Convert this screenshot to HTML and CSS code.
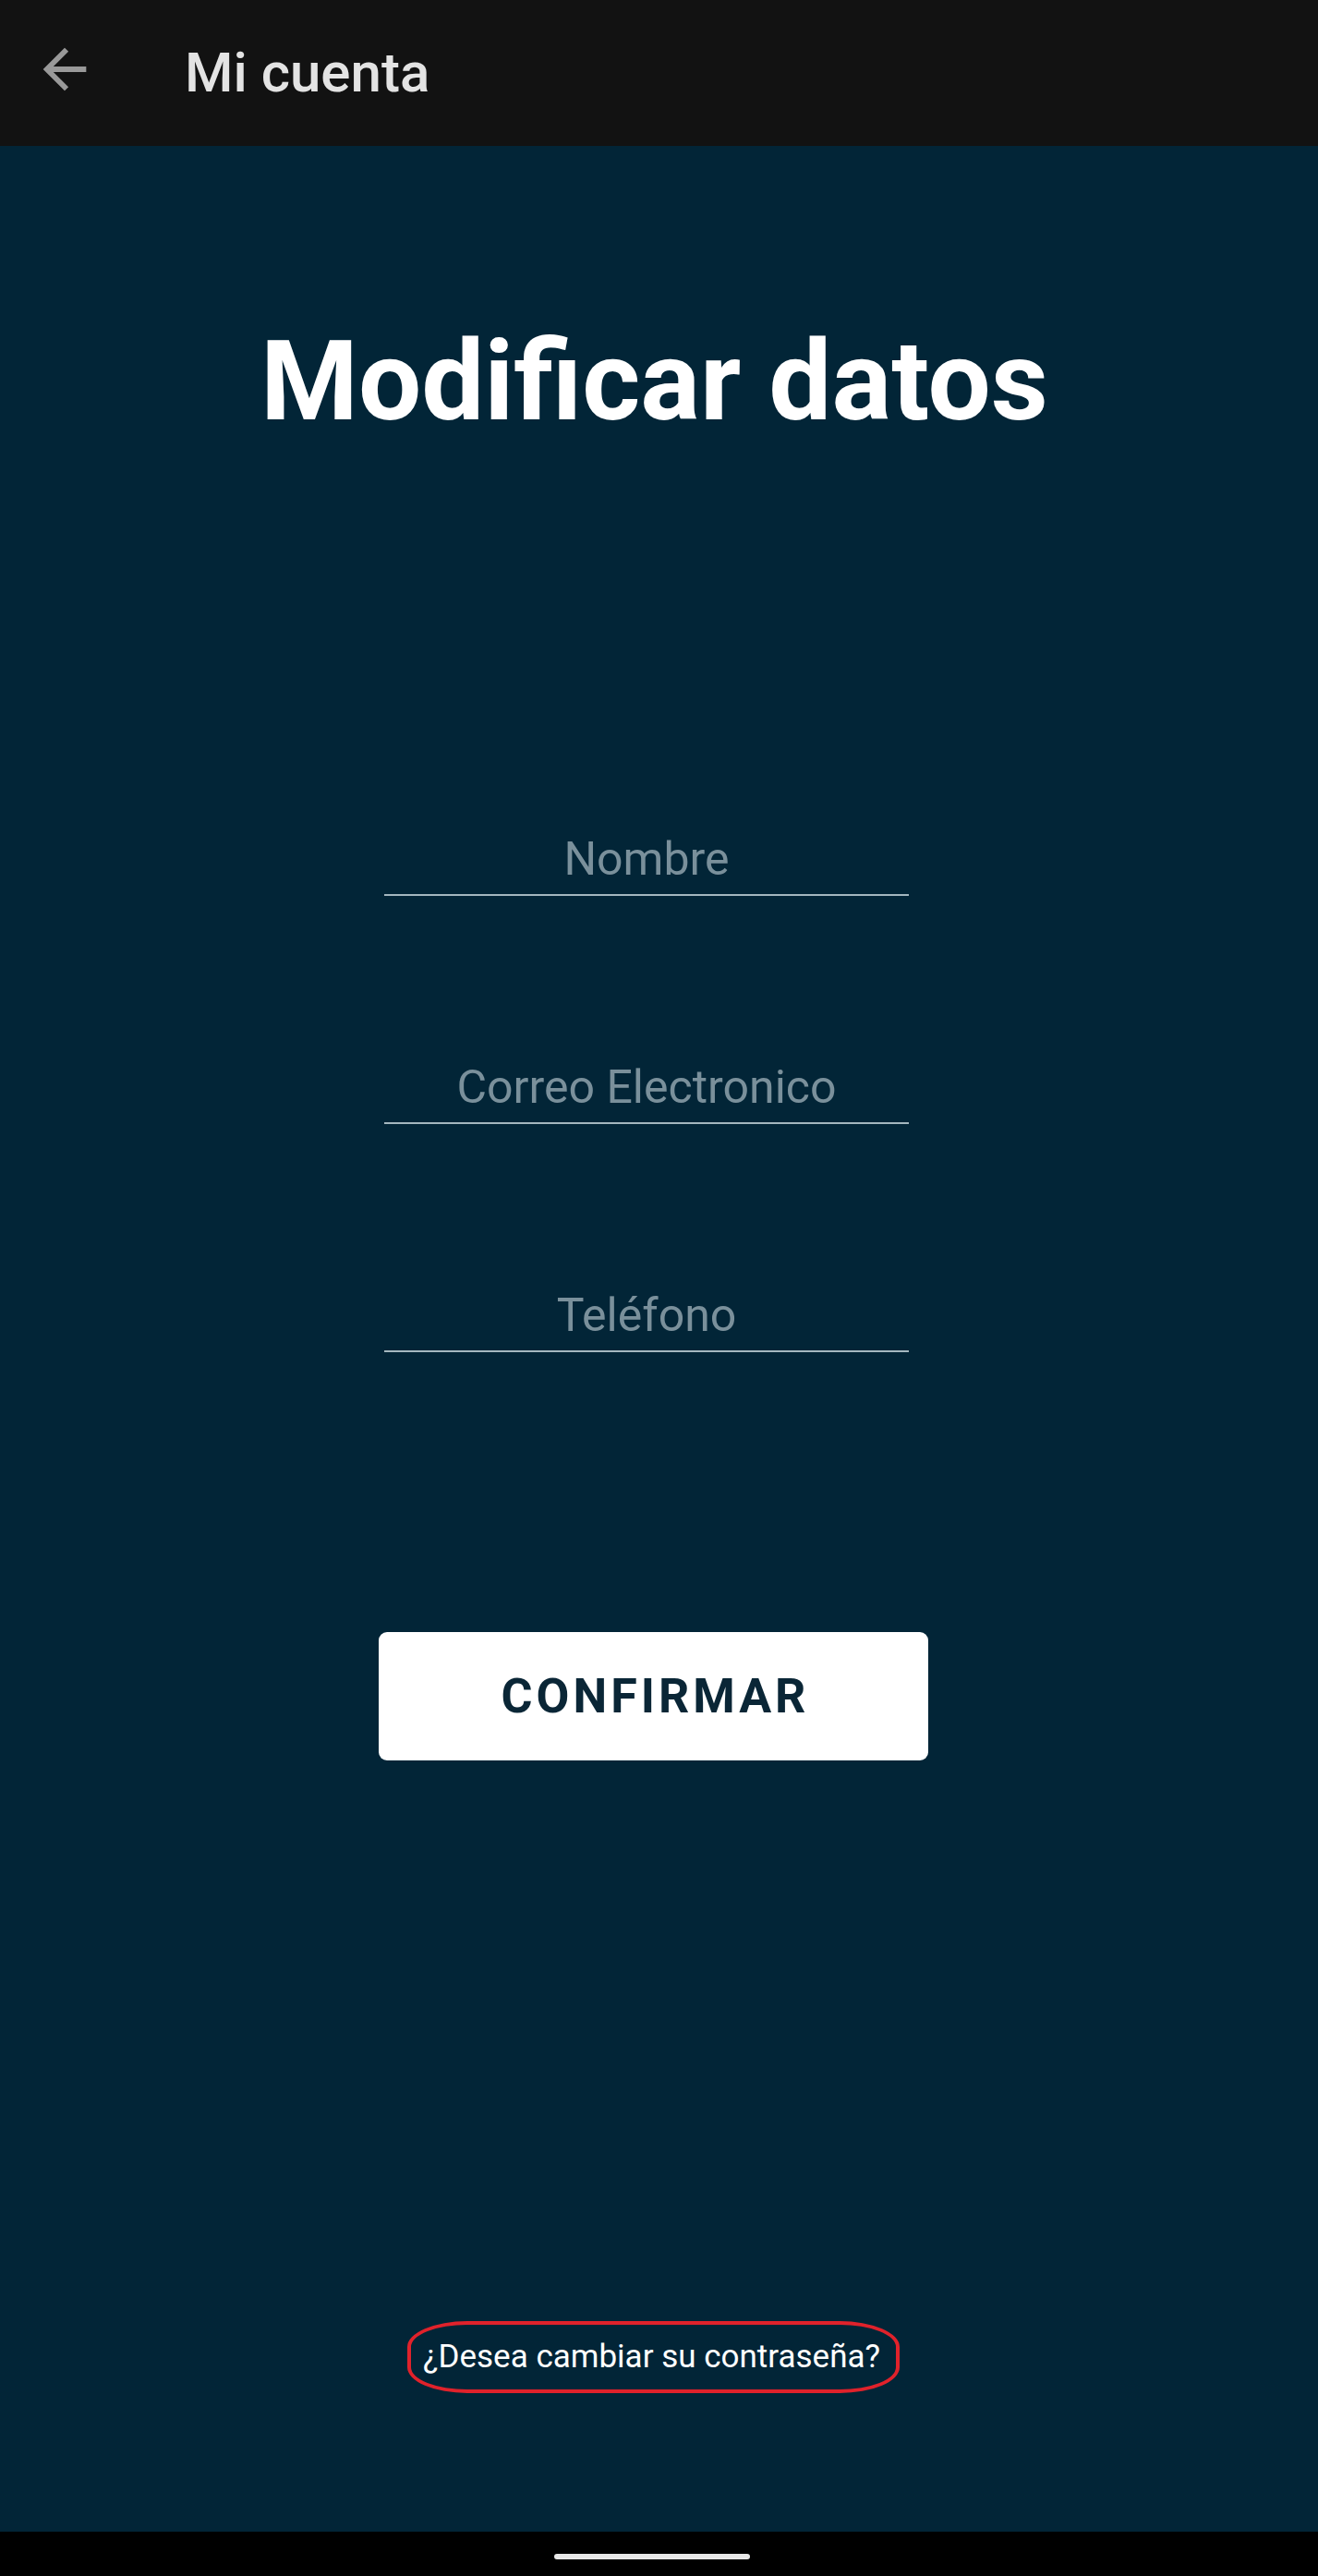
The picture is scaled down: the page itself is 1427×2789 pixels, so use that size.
FILE: index.html
```html
<!DOCTYPE html>
<html lang="es">
<head>
<meta charset="utf-8">
<title>Mi cuenta</title>
<link rel="stylesheet" href="styles.css">
</head>
<body>
<div class="screen">
  <header class="appbar">
    <svg class="back" viewBox="0 0 24 24" aria-hidden="true"><path d="M20 11H7.83l5.59-5.59L12 4l-8 8 8 8 1.41-1.41L7.83 13H20v-2z"/></svg>
    <h1 class="appbar-title">Mi cuenta</h1>
  </header>
  <main class="content">
    <h2 class="title">Modificar datos</h2>
    <div class="form">
      <div class="field">Nombre</div>
      <div class="field">Correo Electronico</div>
      <div class="field">Teléfono</div>
    </div>
    <button class="confirm" type="button">CONFIRMAR</button>
    <a class="change-pass" href="#">¿Desea cambiar su contraseña?</a>
  </main>
  <footer class="navbar"><span class="pill"></span></footer>
</div>
</body>
</html>
```
FILE: styles.css
```css
html, body {
  margin: 0;
  padding: 0;
}
body {
  font-family: Roboto, "Liberation Sans", sans-serif;
  background: #000;
}
.screen {
  display: flex;
  flex-direction: column;
  height: 2789px;
}
.appbar {
  height: 158px;
  flex: none;
  background: #121212;
  display: flex;
  align-items: flex-start;
  padding-top: 40px;
  box-sizing: border-box;
}
.back {
  width: 70px;
  height: 70px;
  margin-left: 35px;
  fill: #999999;
  flex: none;
}
.appbar-title {
  margin: 9px 0 0 95px;
  font-size: 60px;
  line-height: 1;
  font-weight: 500;
  color: #e3e3e3;
}
.content {
  flex: 1;
  background: #022537;
  display: flex;
  flex-direction: column;
  align-items: center;
}
.title {
  margin: 195px 0 0 0;
  font-size: 121px;
  line-height: 1;
  font-weight: 700;
  color: #ffffff;
  padding-right: 10px;
}
.form {
  margin-top: 426px;
  display: flex;
  flex-direction: column;
  gap: 177px;
  margin-right: 27px;
}
.field {
  width: 568px;
  box-sizing: border-box;
  font-size: 50px;
  line-height: 60px;
  padding-bottom: 8px;
  border-bottom: 2px solid #a4b7bf;
  text-align: center;
  color: #7a909b;
}
.confirm {
  margin: 303px 12px 0 0;
  width: 595px;
  height: 139px;
  border: none;
  border-radius: 9px;
  background: #ffffff;
  color: #0a2636;
  font-family: Roboto, "Liberation Sans", sans-serif;
  font-weight: 700;
  font-size: 52px;
  line-height: 1;
  letter-spacing: 4px;
  padding: 0 0 0 4px;
}
.change-pass {
  margin: 607px 12px 0 0;
  padding: 14px 17px 14px 13px;
  border: 4px solid #e0222b;
  border-radius: 65px / 28px;
  color: #ffffff;
  text-decoration: none;
  font-size: 35px;
  line-height: 42px;
}
.navbar {
  height: 48px;
  flex: none;
  background: #000;
  display: flex;
  justify-content: center;
  align-items: flex-start;
}
.pill {
  margin: 24px 15px 0 0;
  width: 212px;
  height: 6px;
  border-radius: 3px;
  background: #e8e8e8;
}
```
